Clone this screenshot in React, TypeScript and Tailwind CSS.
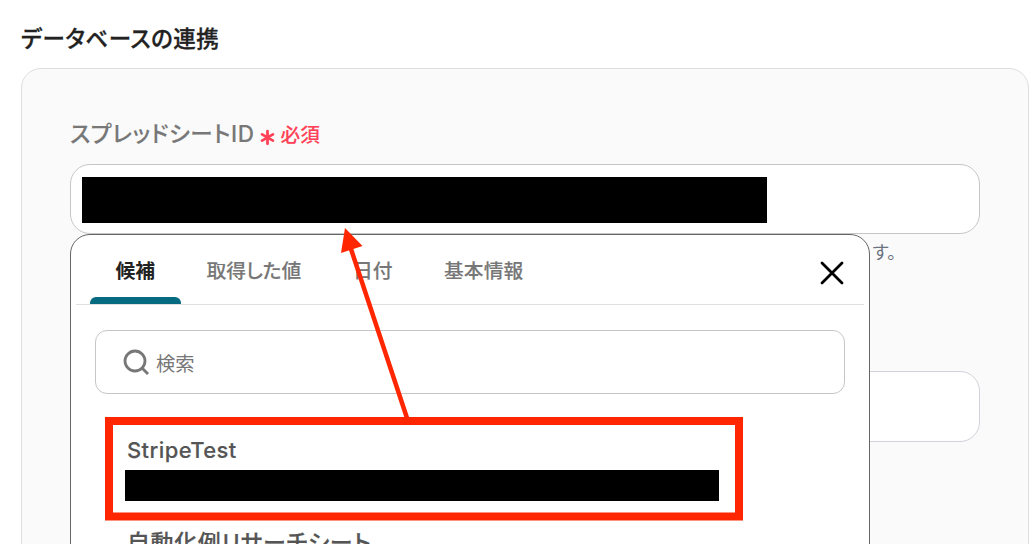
import { Asterisk } from 'lucide-react';

const TABS = ['候補', '取得した値', '日付', '基本情報'];

function RequiredBadge() {
  return (
    <span className="ml-px flex items-center pt-[4px] text-[19.7px] font-medium text-[#ff4257] [-webkit-text-stroke:0.1px]">
      <Asterisk className="mt-[2px] size-[25px]" strokeWidth={2.7} />
      必須
    </span>
  );
}

function TabBar() {
  return (
    <div className="mx-[5px] flex h-[70px] border-b border-[#e0e0e0] pl-[14px]">
      {TABS.map((tab, i) => (
        <div
          key={tab}
          className={
            i === 0
              ? 'flex flex-col justify-between px-[25.5px] pt-[21px] font-bold text-[#222222]'
              : 'flex flex-col px-[25.8px] pt-[21px] font-medium text-[#777777] [-webkit-text-stroke:0.12px]'
          }
        >
          <span className="text-[19.8px] leading-[30px]">{tab}</span>
          {i === 0 && <div className="-mx-[25.5px] h-[7px] rounded-t-md bg-[#066b80]" />}
        </div>
      ))}
      <button className="mt-[27px] mr-[21px] ml-auto size-[22px]" aria-label="close">
        <svg viewBox="0 0 22 22" className="size-[22px] overflow-visible" stroke="#000" strokeWidth="2.8" strokeLinecap="round">
          <path d="M1 1 21 21M21 1 1 21" />
        </svg>
      </button>
    </div>
  );
}

function SearchBox() {
  return (
    <div className="mx-6 mt-[25px] flex h-16 items-center rounded-[12px] border border-[#c6c6c6] pl-[27px] text-[#777777]">
      <svg viewBox="0 0 27 27" className="size-[27px]" fill="none" stroke="currentColor" strokeWidth="2.8">
        <circle cx="12" cy="12" r="10" />
        <path d="m19 19 6 6" />
      </svg>
      <span className="ml-[6px] pt-[5px] text-[19.3px]">検索</span>
    </div>
  );
}

function CandidatePopup() {
  return (
    <div className="absolute top-[234px] left-[70px] h-[340px] w-[800px] rounded-t-[20px] border border-[#666666] bg-white">
      <TabBar />
      <SearchBox />
      <div className="mt-[40px] pl-[54px] text-[#555555]">
        <div className="pl-[2px] text-[22px] leading-8 font-medium tracking-[0.4px] [-webkit-text-stroke:0.15px]">StripeTest</div>
        <div className="mt-[4px] h-[31px] w-[594px] bg-black" />
        <div className="mt-[26px] pl-[2px] text-[23px] leading-8 font-medium tracking-[0.6px] [-webkit-text-stroke:0.2px]">
          自動化例リサーチシート
        </div>
      </div>
    </div>
  );
}

function Annotation() {
  return (
    <svg className="absolute inset-0 h-[544px] w-[1034px]" viewBox="0 0 1034 544">
      <rect x="109" y="421" width="630" height="95.5" fill="none" stroke="#ff2600" strokeWidth="8" />
      <path d="M407 418 351 249" stroke="#ff2600" strokeWidth="4.5" />
      <path d="M345 228 362.500 246 341 253Z" fill="#ff2600" />
    </svg>
  );
}

export default function App() {
  return (
    <div className="relative h-[544px] w-[1034px] overflow-hidden bg-white font-[Inter,'Noto_Sans_CJK_JP',sans-serif] [font-feature-settings:'palt']">
      <h2 className="pt-[23px] pl-[21px] text-[22.500px] leading-8 font-medium tracking-[0.5px] text-[#222222] [-webkit-text-stroke:0.3px]">
        データベースの連携
      </h2>
      <section className="mt-[13px] ml-[21px] h-[520px] w-[1008px] rounded-t-[20px] border border-[#dcdee2] bg-[#fafafa] px-12">
        <div className="mt-[49px] flex h-8 items-center text-[22.500px] font-medium text-[#777777]">
          <span className="tracking-[0.55px] [-webkit-text-stroke:0.12px]">スプレッドシートID</span>
          <RequiredBadge />
        </div>
        <div className="mt-[14px] h-[70px] rounded-[20px] border border-[#c6c6c6] bg-white pt-[12px] pl-[11px]">
          <div className="h-[46px] w-[685px] bg-black" />
        </div>
        <p className="mt-[5px] pr-[84px] text-right text-[18px] leading-7 text-[#6b7280]">す。</p>
        <div className="mt-[104px] h-[71px] rounded-[20px] border border-[#d0d3d9] bg-white" />
      </section>
      <CandidatePopup />
      <Annotation />
    </div>
  );
}
